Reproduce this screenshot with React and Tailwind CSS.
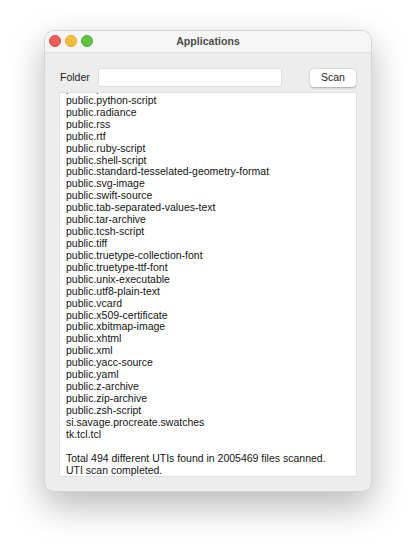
import React from "react";

const lines = [
  "public.presentation",
  "public.python-script",
  "public.radiance",
  "public.rss",
  "public.rtf",
  "public.ruby-script",
  "public.shell-script",
  "public.standard-tesselated-geometry-format",
  "public.svg-image",
  "public.swift-source",
  "public.tab-separated-values-text",
  "public.tar-archive",
  "public.tcsh-script",
  "public.tiff",
  "public.truetype-collection-font",
  "public.truetype-ttf-font",
  "public.unix-executable",
  "public.utf8-plain-text",
  "public.vcard",
  "public.x509-certificate",
  "public.xbitmap-image",
  "public.xhtml",
  "public.xml",
  "public.yacc-source",
  "public.yaml",
  "public.z-archive",
  "public.zip-archive",
  "public.zsh-script",
  "si.savage.procreate.swatches",
  "tk.tcl.tcl",
  "",
  "Total 494 different UTIs found in 2005469 files scanned.",
  "UTI scan completed.",
];

const App = () => {
  return (
    <div
      className="min-h-[551px] w-[417px] bg-white pl-[44px] pt-[30px]"
      style={{ fontFamily: '"Liberation Sans", Arial, sans-serif' }}
    >
      <div className="w-[328px] h-[462px] rounded-[10px] bg-[#ededed] border border-[#d4d4d4] shadow-[0_14px_36px_rgba(0,0,0,0.28)] overflow-hidden flex flex-col">
        {/* Title bar */}
        <div className="relative h-[22px] flex items-center justify-center bg-[#f6f6f6] border-b border-[#dcdcdc]">
          <div className="absolute left-[4px] top-[4px] flex gap-[4px]">
            <div className="w-[12px] h-[12px] rounded-full bg-[#ee5d56] border border-[#d9483f]" />
            <div className="w-[12px] h-[12px] rounded-full bg-[#f6bd3b] border border-[#dea530]" />
            <div className="w-[12px] h-[12px] rounded-full bg-[#5fc441] border border-[#4ead34]" />
          </div>
          <span className="text-[10.6px] font-bold text-[#4a4a4a]">Applications</span>
        </div>

        {/* Folder row */}
        <div className="flex items-center mt-[16px] pl-[15px] pr-[15px] h-[17px]">
          <span className="text-[10.5px] text-[#222]">Folder</span>
          <div className="ml-[9px] w-[182px] h-[17px] bg-white shadow-[0_0_1px_rgba(0,0,0,0.35)]" />
          <div className="ml-auto w-[46px] h-[18px] rounded-[4px] bg-white shadow-[0_0.5px_2px_rgba(0,0,0,0.3)] flex items-center justify-center text-[10.5px] text-[#222]">
            Scan
          </div>
        </div>

        {/* Output */}
        <div className="mx-[14px] mt-[6px] h-[385px] bg-white border border-[#e0e0e0] overflow-hidden">
          <div className="pl-[6px] mt-[-10px] text-[10.5px] leading-[11.93px] text-[#141414]">
            {lines.map((l, i) => (
              <div key={i} className="h-[11.93px] whitespace-nowrap">
                {l}
              </div>
            ))}
          </div>
        </div>
      </div>
    </div>
  );
};

export default App;
